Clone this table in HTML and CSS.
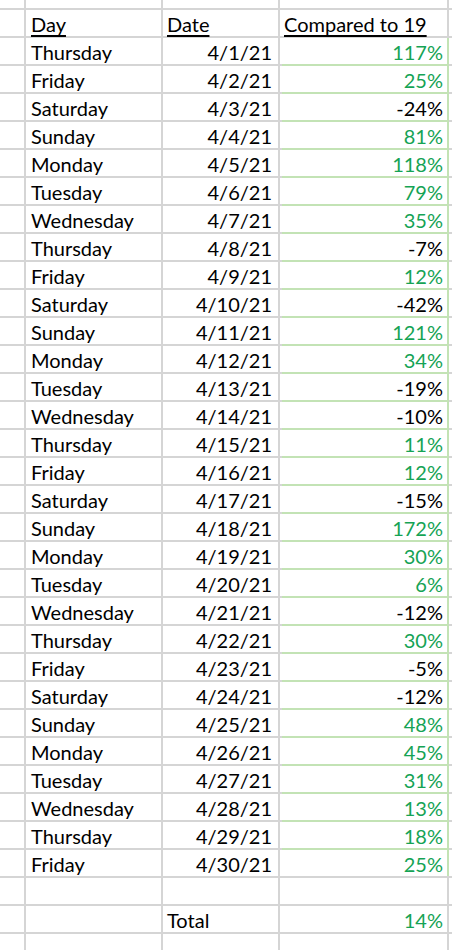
FILE: index.html
```html
<!DOCTYPE html>
<html>
<head>
<meta charset="utf-8">
<link rel="stylesheet" href="styles.css">
</head>
<body>
<div class="sheet">
  <div class="cell top"></div><div class="cell top"></div><div class="cell top"></div><div class="cell top"></div><div class="cell top"></div>

  <div class="cell"></div><div class="cell a"><u>Day</u></div><div class="cell b hl"><u>Date</u></div><div class="cell c hl"><u>Compared to 19</u></div><div class="cell"></div>

  <div class="cell"></div><div class="cell a">Thursday</div><div class="cell b">4/1/21</div><div class="cell c sel g">117%</div><div class="cell"></div>
  <div class="cell"></div><div class="cell a">Friday</div><div class="cell b">4/2/21</div><div class="cell c sel g">25%</div><div class="cell"></div>
  <div class="cell"></div><div class="cell a">Saturday</div><div class="cell b">4/3/21</div><div class="cell c sel">-24%</div><div class="cell"></div>
  <div class="cell"></div><div class="cell a">Sunday</div><div class="cell b">4/4/21</div><div class="cell c sel g">81%</div><div class="cell"></div>
  <div class="cell"></div><div class="cell a">Monday</div><div class="cell b">4/5/21</div><div class="cell c sel g">118%</div><div class="cell"></div>
  <div class="cell"></div><div class="cell a">Tuesday</div><div class="cell b">4/6/21</div><div class="cell c sel g">79%</div><div class="cell"></div>
  <div class="cell"></div><div class="cell a">Wednesday</div><div class="cell b">4/7/21</div><div class="cell c sel g">35%</div><div class="cell"></div>
  <div class="cell"></div><div class="cell a">Thursday</div><div class="cell b">4/8/21</div><div class="cell c sel">-7%</div><div class="cell"></div>
  <div class="cell"></div><div class="cell a">Friday</div><div class="cell b">4/9/21</div><div class="cell c sel g">12%</div><div class="cell"></div>
  <div class="cell"></div><div class="cell a">Saturday</div><div class="cell b">4/10/21</div><div class="cell c sel">-42%</div><div class="cell"></div>
  <div class="cell"></div><div class="cell a">Sunday</div><div class="cell b">4/11/21</div><div class="cell c sel g">121%</div><div class="cell"></div>
  <div class="cell"></div><div class="cell a">Monday</div><div class="cell b">4/12/21</div><div class="cell c sel g">34%</div><div class="cell"></div>
  <div class="cell"></div><div class="cell a">Tuesday</div><div class="cell b">4/13/21</div><div class="cell c sel">-19%</div><div class="cell"></div>
  <div class="cell"></div><div class="cell a">Wednesday</div><div class="cell b">4/14/21</div><div class="cell c sel">-10%</div><div class="cell"></div>
  <div class="cell"></div><div class="cell a">Thursday</div><div class="cell b">4/15/21</div><div class="cell c sel g">11%</div><div class="cell"></div>
  <div class="cell"></div><div class="cell a">Friday</div><div class="cell b">4/16/21</div><div class="cell c sel g">12%</div><div class="cell"></div>
  <div class="cell"></div><div class="cell a">Saturday</div><div class="cell b">4/17/21</div><div class="cell c sel">-15%</div><div class="cell"></div>
  <div class="cell"></div><div class="cell a">Sunday</div><div class="cell b">4/18/21</div><div class="cell c sel g">172%</div><div class="cell"></div>
  <div class="cell"></div><div class="cell a">Monday</div><div class="cell b">4/19/21</div><div class="cell c sel g">30%</div><div class="cell"></div>
  <div class="cell"></div><div class="cell a">Tuesday</div><div class="cell b">4/20/21</div><div class="cell c sel g">6%</div><div class="cell"></div>
  <div class="cell"></div><div class="cell a">Wednesday</div><div class="cell b">4/21/21</div><div class="cell c sel">-12%</div><div class="cell"></div>
  <div class="cell"></div><div class="cell a">Thursday</div><div class="cell b">4/22/21</div><div class="cell c sel g">30%</div><div class="cell"></div>
  <div class="cell"></div><div class="cell a">Friday</div><div class="cell b">4/23/21</div><div class="cell c sel">-5%</div><div class="cell"></div>
  <div class="cell"></div><div class="cell a">Saturday</div><div class="cell b">4/24/21</div><div class="cell c sel">-12%</div><div class="cell"></div>
  <div class="cell"></div><div class="cell a">Sunday</div><div class="cell b">4/25/21</div><div class="cell c sel g">48%</div><div class="cell"></div>
  <div class="cell"></div><div class="cell a">Monday</div><div class="cell b">4/26/21</div><div class="cell c sel g">45%</div><div class="cell"></div>
  <div class="cell"></div><div class="cell a">Tuesday</div><div class="cell b">4/27/21</div><div class="cell c sel g">31%</div><div class="cell"></div>
  <div class="cell"></div><div class="cell a">Wednesday</div><div class="cell b">4/28/21</div><div class="cell c sel g">13%</div><div class="cell"></div>
  <div class="cell"></div><div class="cell a">Thursday</div><div class="cell b">4/29/21</div><div class="cell c sel g">18%</div><div class="cell"></div>
  <div class="cell"></div><div class="cell a">Friday</div><div class="cell b">4/30/21</div><div class="cell c sel last g">25%</div><div class="cell"></div>

  <div class="cell"></div><div class="cell a"></div><div class="cell b"></div><div class="cell c"></div><div class="cell"></div>

  <div class="cell"></div><div class="cell a"></div><div class="cell b hl">Total</div><div class="cell c g">14%</div><div class="cell"></div>

  <div class="cell bottom"></div><div class="cell bottom"></div><div class="cell bottom"></div><div class="cell bottom"></div><div class="cell bottom"></div>
</div>
</body>
</html>
```

FILE: styles.css
```css
html, body {
  margin: 0;
  padding: 0;
  background: #ffffff;
  overflow: hidden;
}

.sheet {
  display: grid;
  grid-template-columns: 24px 135px 115px 167px 1fr;
  grid-template-rows: 8px repeat(33, 26px) 16px;
  gap: 2px;
  background: #d5d5d5;
  width: 452px;
  height: 950px;
  font-family: Lato, "Liberation Sans", sans-serif;
  font-size: 20px;
  color: #000000;
}

.cell {
  background: #ffffff;
  display: flex;
  align-items: flex-end;
  line-height: 22px;
  padding-bottom: 1px;
  white-space: nowrap;
  overflow: visible;
}

.a {
  padding-left: 5px;
}

.b {
  justify-content: flex-end;
  padding-right: 6px;
}

.c {
  justify-content: flex-end;
  padding-right: 4px;
}

.hl {
  justify-content: flex-start;
  padding-left: 4px;
  padding-right: 0;
}

.g {
  color: #15a355;
}

.sel {
  position: relative;
  box-shadow: 2px 0 0 #c3e3b5, 2px 2px 0 #c3e3b5;
}

.sel.last {
  box-shadow: 2px 0 0 #c3e3b5;
}

u {
  text-decoration-thickness: 2px;
  text-underline-offset: 3px;
}
```
